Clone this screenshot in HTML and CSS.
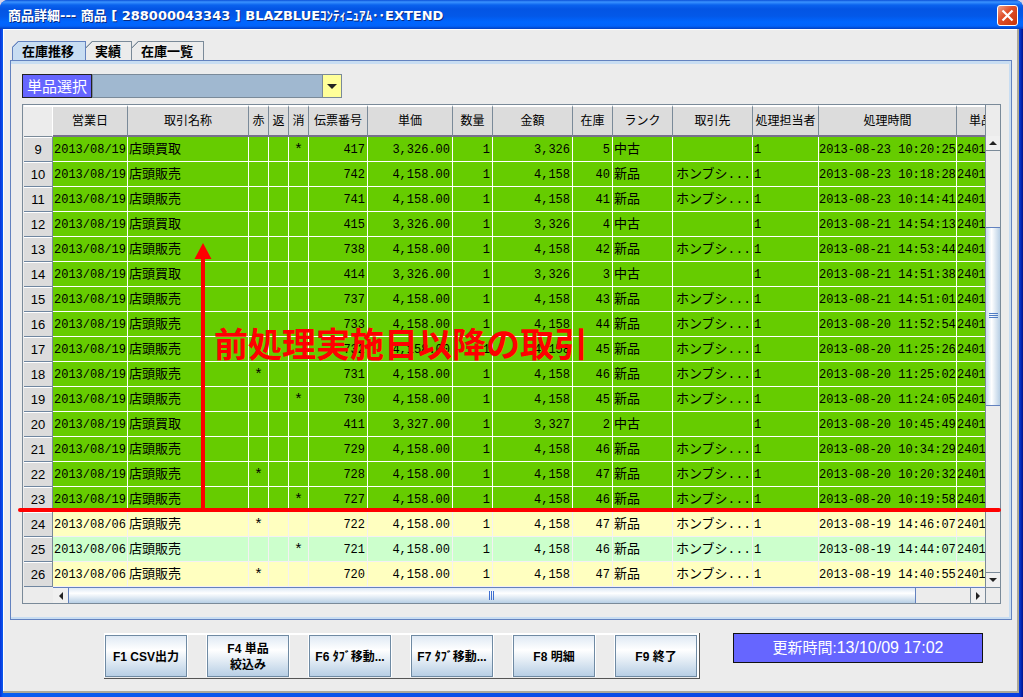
FILE: index.html
```html
<!DOCTYPE html>
<html lang="ja">
<head>
<meta charset="utf-8">
<title>商品詳細</title>
<link rel="stylesheet" href="styles.css">
</head>
<body>
<div class="window">
  <header class="titlebar">
    <h1 class="title">商品詳細--- 商品 [ 288000043343 ] BLAZBLUEｺﾝﾃｨﾆｭｱﾑ･･EXTEND</h1>
    <button class="close" type="button" aria-label="閉じる">
      <svg width="13" height="13" viewBox="0 0 13 13" aria-hidden="true"><path d="M1.5 1.5L11.5 11.5M11.5 1.5L1.5 11.5" stroke="#fff" stroke-width="2.2" fill="none"/></svg>
    </button>
  </header>
  <main class="client">
    <div class="tabs" role="tablist">
      <button class="tab tab-active" type="button" role="tab" aria-selected="true">在庫推移</button>
      <button class="tab" type="button" role="tab" aria-selected="false">実績</button>
      <button class="tab" type="button" role="tab" aria-selected="false">在庫一覧</button>
    </div>
    <section class="panel">
      <div class="picker">
        <label class="picker-label" for="item">単品選択</label>
        <div class="combo">
          <select class="combo-select" id="item"><option></option></select>
          <span class="combo-arrow"><svg width="10" height="5" viewBox="0 0 10 5" aria-hidden="true"><path d="M0 0H10L5 5Z" fill="#222"/></svg></span>
        </div>
      </div>
      <div class="grid">
        <div class="viewport">
          <table class="stock">
            <colgroup><col class="w-no"><col class="w-date"><col class="w-name"><col class="w-flag"><col class="w-flag"><col class="w-flag"><col class="w-slip"><col class="w-price"><col class="w-qty"><col class="w-amount"><col class="w-qty"><col class="w-rank"><col class="w-amount"><col class="w-staff"><col class="w-time"><col></colgroup>
            <thead>
              <tr><td></td><th>営業日</th><th>取引名称</th><th>赤</th><th>返</th><th>消</th><th>伝票番号</th><th>単価</th><th>数量</th><th>金額</th><th>在庫</th><th>ランク</th><th>取引先</th><th>処理担当者</th><th>処理時間</th><th>単品</th></tr>
            </thead>
            <tbody>
              <tr class="new"><th>9</th><td>2013/08/19</td><td>店頭買取</td><td></td><td></td><td>*</td><td>417</td><td>3,326.00</td><td>1</td><td>3,326</td><td>5</td><td>中古</td><td></td><td>1</td><td>2013-08-23 10:20:25</td><td>2401</td></tr>
              <tr class="new"><th>10</th><td>2013/08/19</td><td>店頭販売</td><td></td><td></td><td></td><td>742</td><td>4,158.00</td><td>1</td><td>4,158</td><td>40</td><td>新品</td><td>ホンブシ...</td><td>1</td><td>2013-08-23 10:18:28</td><td>2401</td></tr>
              <tr class="new"><th>11</th><td>2013/08/19</td><td>店頭販売</td><td></td><td></td><td></td><td>741</td><td>4,158.00</td><td>1</td><td>4,158</td><td>41</td><td>新品</td><td>ホンブシ...</td><td>1</td><td>2013-08-23 10:14:41</td><td>2401</td></tr>
              <tr class="new"><th>12</th><td>2013/08/19</td><td>店頭買取</td><td></td><td></td><td></td><td>415</td><td>3,326.00</td><td>1</td><td>3,326</td><td>4</td><td>中古</td><td></td><td>1</td><td>2013-08-21 14:54:13</td><td>2401</td></tr>
              <tr class="new"><th>13</th><td>2013/08/19</td><td>店頭販売</td><td></td><td></td><td></td><td>738</td><td>4,158.00</td><td>1</td><td>4,158</td><td>42</td><td>新品</td><td>ホンブシ...</td><td>1</td><td>2013-08-21 14:53:44</td><td>2401</td></tr>
              <tr class="new"><th>14</th><td>2013/08/19</td><td>店頭買取</td><td></td><td></td><td></td><td>414</td><td>3,326.00</td><td>1</td><td>3,326</td><td>3</td><td>中古</td><td></td><td>1</td><td>2013-08-21 14:51:38</td><td>2401</td></tr>
              <tr class="new"><th>15</th><td>2013/08/19</td><td>店頭販売</td><td></td><td></td><td></td><td>737</td><td>4,158.00</td><td>1</td><td>4,158</td><td>43</td><td>新品</td><td>ホンブシ...</td><td>1</td><td>2013-08-21 14:51:01</td><td>2401</td></tr>
              <tr class="new"><th>16</th><td>2013/08/19</td><td>店頭販売</td><td></td><td></td><td></td><td>733</td><td>4,158.00</td><td>1</td><td>4,158</td><td>44</td><td>新品</td><td>ホンブシ...</td><td>1</td><td>2013-08-20 11:52:54</td><td>2401</td></tr>
              <tr class="new"><th>17</th><td>2013/08/19</td><td>店頭販売</td><td></td><td></td><td></td><td>732</td><td>4,158.00</td><td>1</td><td>4,158</td><td>45</td><td>新品</td><td>ホンブシ...</td><td>1</td><td>2013-08-20 11:25:26</td><td>2401</td></tr>
              <tr class="new"><th>18</th><td>2013/08/19</td><td>店頭販売</td><td>*</td><td></td><td></td><td>731</td><td>4,158.00</td><td>1</td><td>4,158</td><td>46</td><td>新品</td><td>ホンブシ...</td><td>1</td><td>2013-08-20 11:25:02</td><td>2401</td></tr>
              <tr class="new"><th>19</th><td>2013/08/19</td><td>店頭販売</td><td></td><td></td><td>*</td><td>730</td><td>4,158.00</td><td>1</td><td>4,158</td><td>45</td><td>新品</td><td>ホンブシ...</td><td>1</td><td>2013-08-20 11:24:05</td><td>2401</td></tr>
              <tr class="new"><th>20</th><td>2013/08/19</td><td>店頭買取</td><td></td><td></td><td></td><td>411</td><td>3,327.00</td><td>1</td><td>3,327</td><td>2</td><td>中古</td><td></td><td>1</td><td>2013-08-20 10:45:49</td><td>2401</td></tr>
              <tr class="new"><th>21</th><td>2013/08/19</td><td>店頭販売</td><td></td><td></td><td></td><td>729</td><td>4,158.00</td><td>1</td><td>4,158</td><td>46</td><td>新品</td><td>ホンブシ...</td><td>1</td><td>2013-08-20 10:34:29</td><td>2401</td></tr>
              <tr class="new"><th>22</th><td>2013/08/19</td><td>店頭販売</td><td>*</td><td></td><td></td><td>728</td><td>4,158.00</td><td>1</td><td>4,158</td><td>47</td><td>新品</td><td>ホンブシ...</td><td>1</td><td>2013-08-20 10:20:32</td><td>2401</td></tr>
              <tr class="new"><th>23</th><td>2013/08/19</td><td>店頭販売</td><td></td><td></td><td>*</td><td>727</td><td>4,158.00</td><td>1</td><td>4,158</td><td>46</td><td>新品</td><td>ホンブシ...</td><td>1</td><td>2013-08-20 10:19:58</td><td>2401</td></tr>
              <tr class="odd"><th>24</th><td>2013/08/06</td><td>店頭販売</td><td>*</td><td></td><td></td><td>722</td><td>4,158.00</td><td>1</td><td>4,158</td><td>47</td><td>新品</td><td>ホンブシ...</td><td>1</td><td>2013-08-19 14:46:07</td><td>2401</td></tr>
              <tr class="even"><th>25</th><td>2013/08/06</td><td>店頭販売</td><td></td><td></td><td>*</td><td>721</td><td>4,158.00</td><td>1</td><td>4,158</td><td>46</td><td>新品</td><td>ホンブシ...</td><td>1</td><td>2013-08-19 14:44:07</td><td>2401</td></tr>
              <tr class="odd"><th>26</th><td>2013/08/06</td><td>店頭販売</td><td>*</td><td></td><td></td><td>720</td><td>4,158.00</td><td>1</td><td>4,158</td><td>47</td><td>新品</td><td>ホンブシ...</td><td>1</td><td>2013-08-19 14:40:55</td><td>2401</td></tr>
            </tbody>
          </table>
        </div>
        <div class="vscroll">
          <button class="scroll-button" type="button" aria-label="上へ"><svg width="8" height="4" viewBox="0 0 8 4" aria-hidden="true"><path d="M0 4L4 0L8 4Z" fill="#222"/></svg></button>
          <span class="gap-before"></span>
          <span class="thumb thumb-v"><svg width="9" height="6" viewBox="0 0 9 6" aria-hidden="true"><path d="M0 .5H9M0 2.5H9M0 4.5H9" stroke="#4f7cc4"/></svg></span>
          <span class="gap-after"></span>
          <button class="scroll-button" type="button" aria-label="下へ"><svg width="8" height="4" viewBox="0 0 8 4" aria-hidden="true"><path d="M0 0L4 4L8 0Z" fill="#222"/></svg></button>
        </div>
        <div class="hscroll">
          <button class="scroll-button" type="button" aria-label="左へ"><svg width="4" height="8" viewBox="0 0 4 8" aria-hidden="true"><path d="M4 0L0 4L4 8Z" fill="#222"/></svg></button>
          <span class="thumb thumb-h"><svg width="6" height="9" viewBox="0 0 6 9" aria-hidden="true"><path d="M.5 0V9M2.5 0V9M4.5 0V9" stroke="#3f6fd0"/></svg></span>
          <span class="gap-right"></span>
          <button class="scroll-button" type="button" aria-label="右へ"><svg width="4" height="8" viewBox="0 0 4 8" aria-hidden="true"><path d="M0 0L4 4L0 8Z" fill="#222"/></svg></button>
        </div>
        <div class="corner"></div>
        <div class="note-line"></div>
        <svg class="note-arrow" width="18" height="267" viewBox="0 0 18 267" aria-hidden="true"><path d="M9 0L17.500 16H11V267H7V16H.5Z" fill="#f00"/></svg>
        <p class="note-text">前処理実施日以降の取引</p>
      </div>
    </section>
    <footer class="footer">
      <div class="keys">
        <button class="key" type="button">F1 CSV出力</button>
        <button class="key" type="button">F4 単品<br>絞込み</button>
        <button class="key" type="button">F6 ﾀﾌﾞ移動...</button>
        <button class="key" type="button">F7 ﾀﾌﾞ移動...</button>
        <button class="key" type="button">F8 明細</button>
        <button class="key" type="button">F9 終了</button>
      </div>
      <div class="updated">更新時間:<span class="updated-time">13/10/09 17:02</span></div>
    </footer>
  </main>
</div>
</body>
</html>
```
FILE: styles.css
```css
* { box-sizing: border-box; }

body {
  margin: 0;
  background: #d8d4e8;
  color: #000;
  font: 12px/16px "Liberation Sans", "Noto Sans CJK JP", sans-serif;
}

button, select { font: inherit; color: inherit; margin: 0; }

.window {
  display: flex;
  flex-direction: column;
  min-height: 100vh;
  padding: 0 4px 4px 3px;
  border-radius: 8px 8px 0 0;
  background: linear-gradient(90deg, #0831d9, #0a5cf0 3px, #0a3fe0 calc(100% - 4px), #00138c);
  border-bottom: 1px solid #00138c;
}

.titlebar {
  display: flex;
  align-items: center;
  justify-content: space-between;
  height: 29px;
  margin: 0 -4px 0 -3px;
  padding: 2px 5px 0 8px;
  border-radius: 8px 8px 0 0;
  background: linear-gradient(#0a50d8, #3a93ff 2px, #0a63ee 5px, #0355e4 9px, #0358e8 16px, #0066ff 22px, #0263fa 26px, #0340c0);
}

.title {
  margin: 0;
  color: #fff;
  font: bold 13px/20px "DejaVu Sans", "Noto Sans CJK JP", sans-serif;
  text-shadow: 1px 1px 0 #0a2a80;
  white-space: nowrap;
}

.close {
  display: flex;
  align-items: center;
  justify-content: center;
  width: 21px;
  height: 21px;
  padding: 0;
  border: 1px solid #fff;
  border-radius: 3px;
  background: linear-gradient(135deg, #f0a088, #e0512c 40%, #c83408);
}

.client {
  display: flex;
  flex: 1;
  flex-direction: column;
  padding: 12px 5px 0 7px;
  border-right: 2px solid #aca899;
  border-bottom: 2px solid #aca899;
  background: #ececec;
  box-shadow: inset 1px 1px 0 #fff;
}

.tabs { display: flex; padding-left: 2px; }

.tab {
  height: 19px;
  padding: 0 10px 1px 9px;
  border: 1px solid #7a8a99;
  border-width: 1px 1px 0 0;
  background: linear-gradient(135deg, #7a8a99 5px, #ececec 5px) border-box;
  clip-path: polygon(6px 0, 100% 0, 100% 100%, 0 100%, 0 6px);
  font: bold 13px/17px "Noto Sans CJK JP", sans-serif;
}

.tab-active {
  padding-right: 11px;
  border-color: #6382bf;
  border-left-width: 1px;
  background: linear-gradient(135deg, #6382bf 5px, #c8ddf2 5px) border-box;
}

.panel {
  padding: 10px 10px 15px 11px;
  border: 1px solid #6382bf;
  box-shadow: inset 0 3px 0 #c8ddf2, inset -2px -2px 0 #c8ddf2;
}

.picker { display: flex; padding-top: 3px; margin-bottom: 6px; }

.picker-label {
  height: 24px;
  padding: 0 4px;
  border: 1px solid #222;
  background: #6666ff;
  color: #fff;
  font: 15px/22px "Noto Sans CJK JP", sans-serif;
}

.combo { position: relative; width: 250px; height: 24px; }

.combo-select {
  width: 100%;
  height: 24px;
  border: 1px solid #7a8a99;
  border-radius: 0;
  background: #a0b8d0;
  appearance: none;
}

.combo-arrow {
  position: absolute;
  top: 1px;
  right: 1px;
  display: flex;
  align-items: center;
  justify-content: center;
  width: 19px;
  height: 22px;
  border-left: 1px solid #7a8a99;
  background: #ffff99;
  pointer-events: none;
}

.grid {
  position: relative;
  display: grid;
  grid-template-columns: minmax(0, 1fr) 15px;
  border: 1px solid #7a8a99;
}

.viewport { overflow: hidden; padding-left: 1px; }

.stock {
  width: 100%;
  table-layout: fixed;
  border-collapse: separate;
  border-spacing: 0;
  font: 12px/16px "Liberation Mono", "Noto Sans CJK JP", monospace;
}

.w-no { width: 29px; }
.w-date { width: 75px; }
.w-name { width: 121px; }
.w-flag { width: 20px; }
.w-slip { width: 59px; }
.w-price { width: 85px; }
.w-qty { width: 40px; }
.w-amount { width: 80px; }
.w-rank { width: 60px; }
.w-staff { width: 66px; }
.w-time { width: 138px; }

.stock th, .stock td {
  padding: 2px 1px 0;
  overflow: hidden;
  white-space: nowrap;
  font-weight: normal;
}

.stock thead th {
  height: 32px;
  border-top: 2px solid #fff;
  border-right: 1px solid #7a8a99;
  border-bottom: 2px solid #77708c;
  background: #dcdcdc;
}

.stock thead td { border-bottom: 1px solid #7a8a99; border-right: 1px solid #fff; border-top: 2px solid #fff; }

.stock thead th:last-child {
  padding-left: 12px;
  border-right: 0;
  text-align: left;
}

.stock tbody td, .stock tbody th { height: 25px; }

.stock tbody th {
  padding-top: 1px;
  border-right: 1px solid #7a8a99;
  border-bottom: 1px solid #6f86a0;
  background: #dcdcdc;
  box-shadow: inset 0 1px 0 #fff;
  font: 13px/16px "Liberation Sans", sans-serif;
}

.stock tbody td { border-right: 1px solid #fff; border-bottom: 1px solid #fff; }

.stock tbody td:nth-child(3),
.stock tbody td:nth-child(12),
.stock tbody td:nth-child(13) { font-size: 13px; }
.stock tbody td:nth-child(13) { padding-left: 3px; }

.stock tbody td:nth-child(4),
.stock tbody td:nth-child(5),
.stock tbody td:nth-child(6) {
  padding-top: 4px;
  font-size: 15px;
  text-align: center;
}

.stock tbody td:nth-child(7),
.stock tbody td:nth-child(8),
.stock tbody td:nth-child(9),
.stock tbody td:nth-child(10),
.stock tbody td:nth-child(11) { padding-right: 2px; text-align: right; }

.stock tbody td:nth-child(15) { padding-left: 0; padding-right: 0; }
.stock tbody td:last-child { padding-left: 0; padding-right: 0; border-right: 0; }

.new td { background: #66cc00; }
.odd td { background: #ffffc0; }
.even td { background: #ccffcc; }
.stock .odd td, .stock .even td { border-color: #f4f0f4; }

.scroll-button {
  display: flex;
  flex: none;
  align-items: center;
  justify-content: center;
  width: 15px;
  height: 15px;
  padding: 0;
  border: 0;
  background: #f0f0f0;
}

.vscroll {
  display: flex;
  flex-direction: column;
  padding-top: 31px;
  border-left: 1px solid #7a8a99;
}

.vscroll .scroll-button { width: 14px; border: solid #7a8a99; border-width: 0 0 1px; }
.vscroll .scroll-button:last-child { border-width: 1px 0 0; }

.gap-before { flex: 77; }
.gap-after { flex: 168; }
.gap-right { flex: 54; }

.thumb {
  display: flex;
  align-items: center;
  justify-content: center;
  border: 1px solid #6382bf;
}

.thumb-v {
  flex: 178;
  border-width: 1px 0;
  background: linear-gradient(90deg, #c8ddf2, #fff 40%, #b8cfe5);
}

.thumb-h {
  flex: 847;
  border-width: 0 1px;
  background: linear-gradient(#dce8f5, #fff 35%, #b8cfe5);
}

.hscroll {
  display: flex;
  height: 16px;
  margin-left: 30px;
  border-top: 1px solid #6382bf;
}

.hscroll .scroll-button:last-child { border-left: 1px solid #7a8a99; }

.corner { border: solid #7a8a99; border-width: 1px 0 0 1px; }

.note-line {
  position: absolute;
  top: 403px;
  left: -5px;
  right: -1px;
  height: 4px;
  border-radius: 2px;
  background: #f00;
}

.note-arrow { position: absolute; top: 138px; left: 171px; }

.note-text {
  position: absolute;
  top: 215px;
  left: 191px;
  margin: 0;
  color: #f00;
  font: bold 34px/46px "Noto Sans CJK JP", sans-serif;
  white-space: nowrap;
}

.footer {
  display: flex;
  align-items: flex-start;
  padding: 13px 29px 12px 94px;
}

.keys {
  display: flex;
  gap: 20px;
  padding: 2px 2px 1px 1px;
  border-right: 1px solid #555;
  border-bottom: 1px solid #555;
  box-shadow: inset 0 2px 0 #fff, inset -2px 0 0 #fff;
}

.key {
  width: 82px;
  height: 42px;
  padding: 2px 0 0;
  border: 1px solid #6f8aa3;
  background: linear-gradient(#dfe9f4, #fff 35%, #b8cfe5);
  box-shadow: 1px 0 0 #fff, -1px 0 0 #fff;
  font: bold 12px/16px "Liberation Sans", "Noto Sans CJK JP", sans-serif;
  white-space: nowrap;
}

.updated {
  width: 250px;
  height: 30px;
  margin-left: auto;
  border: 1px solid #111;
  background: #6666ff;
  color: #fff;
  font: 15px/28px "Liberation Sans", "Noto Sans CJK JP", sans-serif;
  text-align: center;
}

.updated-time { font-size: 16px; }
```
